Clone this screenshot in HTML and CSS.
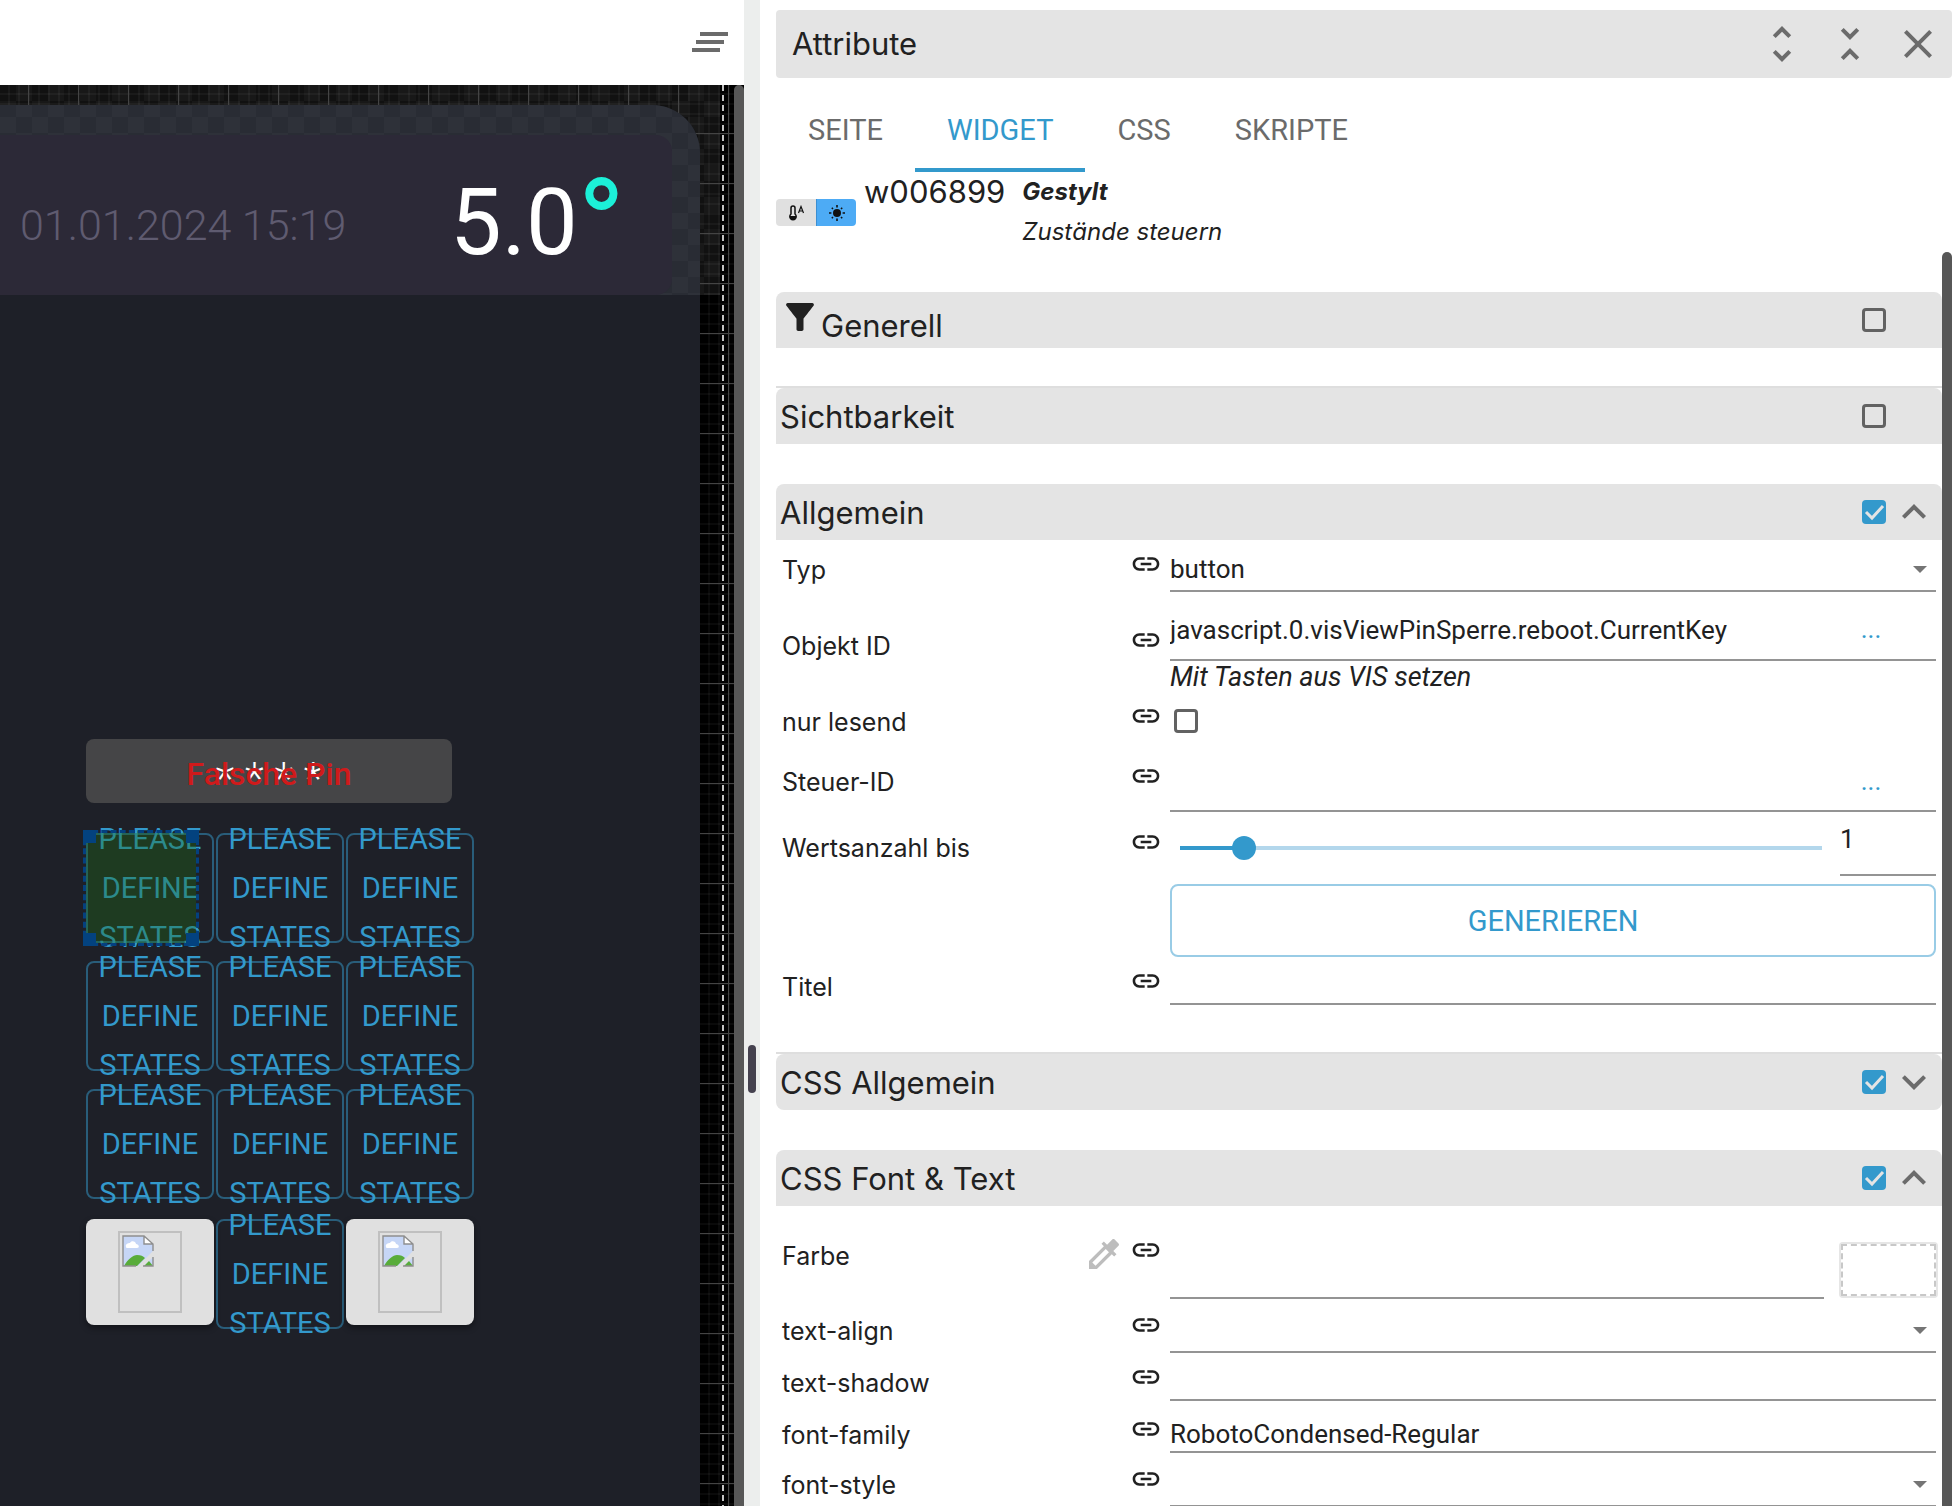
FILE: index.html
```html
<!DOCTYPE html>
<html lang="de">
<head>
<meta charset="utf-8">
<title>VIS Editor – Attribute</title>
<link rel="stylesheet" href="styles.css">
</head>
<body>
<svg class="sprite" aria-hidden="true">
  <symbol id="i-link" viewBox="0 0 24 24"><path d="M3.9 12c0-1.71 1.39-3.1 3.1-3.1h4V7H7c-2.76 0-5 2.24-5 5s2.24 5 5 5h4v-1.9H7c-1.71 0-3.1-1.39-3.1-3.1zM8 13h8v-2H8v2zm9-6h-4v1.9h4c1.71 0 3.1 1.39 3.1 3.1s-1.39 3.1-3.1 3.1h-4V17h4c2.76 0 5-2.24 5-5s-2.24-5-5-5z"/></symbol>
  <symbol id="i-less" viewBox="0 0 24 24"><path d="m12 8-6 6 1.41 1.41L12 10.83l4.59 4.58L18 14z"/></symbol>
  <symbol id="i-more" viewBox="0 0 24 24"><path d="M16.59 8.59 12 13.17 7.41 8.59 6 10l6 6 6-6z"/></symbol>
  <symbol id="i-drop" viewBox="0 0 14 7"><path d="M0 0l7 7 7-7z"/></symbol>
  <symbol id="i-broken" viewBox="0 0 32 32">
    <path d="M1 1h21l9 9v6L16 31H1z" fill="#c6d6f6"/>
    <path d="M31 22v9h-9z" fill="#c6d6f6"/>
    <path d="M4 12c-1-3 2-4 4-4 1-3 6-2 6 1 3 0 4 4 1 4H6c-1 0-2 0-2-1z" fill="#fff"/>
    <path d="M2 31c4-7 9-11 13-11 4 0 6 1 8 3l-8 8zM22 31l5-5 4 5z" fill="#58ac3a"/>
    <path d="M22 1v8h9z" fill="#fff"/>
    <path d="M31 16V9l-9-8H1v30h13M31 22v9H21M22 1v8h9" fill="none" stroke="#8e8e8e" stroke-width="1.4"/>
  </symbol>
</svg>

<main class="editor">
  <section class="workspace">
    <header class="toolbar">
      <button class="icon-btn" aria-label="Menü"><svg class="ic48" viewBox="0 0 24 24"><path d="M5 13h14v-2H5v2zm-2 4h14v-2H3v2zM7 7v2h14V7H7z"/></svg></button>
    </header>
    <div class="canvas">
      <div class="texture"></div>
      <div class="grid-lines"></div>
      <div class="device">
        <div class="device-top"><div class="status"></div></div>
      </div>
      <div class="clock">01.01.2024 15:19</div>
      <div class="temp">5.0</div>
      <div class="degree">°</div>
      <div class="guide"></div>
      <div class="pin"></div>
      <div class="pin-stars">* * * *</div>
      <div class="pin-error">Falsche Pin</div>
      <div class="keypad">
        <button class="key">PLEASE DEFINE STATES</button>
        <button class="key">PLEASE DEFINE STATES</button>
        <button class="key">PLEASE DEFINE STATES</button>
        <button class="key">PLEASE DEFINE STATES</button>
        <button class="key">PLEASE DEFINE STATES</button>
        <button class="key">PLEASE DEFINE STATES</button>
        <button class="key">PLEASE DEFINE STATES</button>
        <button class="key">PLEASE DEFINE STATES</button>
        <button class="key">PLEASE DEFINE STATES</button>
        <button class="key-image" aria-label="Bild links"><span class="missing"><svg><use href="#i-broken"/></svg></span></button>
        <button class="key">PLEASE DEFINE STATES</button>
        <button class="key-image" aria-label="Bild rechts"><span class="missing"><svg><use href="#i-broken"/></svg></span></button>
      </div>
      <div class="selection"><i class="nw"></i><i class="ne"></i><i class="sw"></i><i class="se"></i></div>
      <div class="canvas-scroll"></div>
    </div>
  </section>

  <div class="splitter"><span></span></div>

  <section class="panel">
    <header class="panel-head">
      <h1>Attribute</h1>
      <button class="icon-btn" aria-label="Alle ausklappen"><svg class="ic48" viewBox="0 0 24 24"><path d="M12 5.83 15.17 9l1.41-1.41L12 3 7.41 7.59 8.83 9 12 5.83zm0 12.34L8.83 15l-1.41 1.41L12 21l4.59-4.59L15.17 15 12 18.17z"/></svg></button>
      <button class="icon-btn" aria-label="Alle einklappen"><svg class="ic48" viewBox="0 0 24 24"><path d="M7.41 18.59 8.83 20 12 16.83 15.17 20l1.41-1.41L12 14l-4.59 4.59zm9.18-13.18L15.17 4 12 7.17 8.83 4 7.41 5.41 12 10l4.59-4.59z"/></svg></button>
      <button class="icon-btn" aria-label="Schließen"><svg class="ic48" viewBox="0 0 24 24"><path d="M19 6.41 17.59 5 12 10.59 6.41 5 5 6.41 10.59 12 5 17.59 6.41 19 12 13.41 17.59 19 19 17.59 13.41 12z"/></svg></button>
    </header>
    <nav class="tabs">
      <button>SEITE</button>
      <button class="active">WIDGET</button>
      <button>CSS</button>
      <button>SKRIPTE</button>
    </nav>
    <div class="widget-info">
      <div class="chips">
        <span class="chip"><svg viewBox="0 0 20 16"><path d="M5 9V3a2 2 0 0 1 4 0v6a3.200 3.200 0 1 1-4 0z" fill="none" stroke="#111" stroke-width="1.500"/><path d="M4 11h6v2l-2 1.500H6L4 13z"/><path d="M12.500 8 15 1.500 17.500 8M13.500 6h3" fill="none" stroke="#111" stroke-width="1.200"/></svg></span>
        <span class="chip blue"><svg viewBox="0 0 20 20"><circle cx="10" cy="10" r="5"/><path d="M10 0v3M10 17v3M0 10h3M17 10h3M3.500 3.500l1.500 1.500M15 15l1.500 1.500M3.500 16.500 5 15M15 5l1.500-1.500" stroke="#111" stroke-width="2" fill="none"/></svg></span>
      </div>
      <div class="widget-id">w006899</div>
      <div class="widget-type"><b>Gestylt</b><span>Zustände steuern</span></div>
    </div>

    <div class="scroll">
      <form class="sections">
        <div class="bar filter">
          <svg class="funnel" viewBox="0 0 24 24"><path d="M4.250 5.610C6.270 8.200 10 13 10 13v6c0 .55.45 1 1 1h2c.55 0 1-.45 1-1v-6s3.720-4.800 5.740-7.390c.51-.66.04-1.610-.79-1.610H5.040c-.83 0-1.300.95-.79 1.610z"/></svg>
          <label for="c1">Generell</label><input type="checkbox" id="c1"><span class="chev"></span>
        </div>
        <div class="bar ruled"><label for="c2">Sichtbarkeit</label><input type="checkbox" id="c2"><span class="chev"></span></div>

        <div class="bar"><label for="c3">Allgemein</label><input type="checkbox" id="c3" checked><svg class="chev"><use href="#i-less"/></svg></div>
        <div class="rows general">
          <div class="row choice">
            <label for="f-typ">Typ</label><svg class="link"><use href="#i-link"/></svg>
            <div class="field line"><select id="f-typ"><option>button</option></select><svg class="drop"><use href="#i-drop"/></svg></div>
          </div>
          <div class="row object">
            <label for="f-oid">Objekt ID</label><svg class="link"><use href="#i-link"/></svg>
            <div class="stack">
              <div class="field line tall"><input type="text" id="f-oid" value="javascript.0.visViewPinSperre.reboot.CurrentKey"><button type="button" class="dots">...</button></div>
              <em>Mit Tasten aus VIS setzen</em>
            </div>
          </div>
          <div class="row tick">
            <label for="f-ro">nur lesend</label><svg class="link"><use href="#i-link"/></svg>
            <div class="field"><input type="checkbox" id="f-ro"></div>
          </div>
          <div class="row tick">
            <label for="f-sid">Steuer-ID</label><svg class="link"><use href="#i-link"/></svg>
            <div class="field line tall"><input type="text" id="f-sid"><button type="button" class="dots">...</button></div>
          </div>
          <div class="row slide">
            <label for="f-cnt">Wertsanzahl bis</label><svg class="link"><use href="#i-link"/></svg>
            <div class="field"><input type="range" id="f-cnt" min="0" max="10" value="1"><input type="text" class="count line" aria-label="Wert" value="1"></div>
          </div>
          <div class="row">
            <button type="button" class="generate">GENERIEREN</button>
          </div>
          <div class="row text">
            <label for="f-tit">Titel</label><svg class="link"><use href="#i-link"/></svg>
            <div class="field line"><input type="text" id="f-tit"></div>
          </div>
        </div>

        <div class="bar ruled closed"><label for="c4">CSS Allgemein</label><input type="checkbox" id="c4" checked><svg class="chev"><use href="#i-more"/></svg></div>

        <div class="bar"><label for="c5">CSS Font &amp; Text</label><input type="checkbox" id="c5" checked><svg class="chev"><use href="#i-less"/></svg></div>
        <div class="rows font">
          <div class="row color">
            <label for="f-col">Farbe</label>
            <svg class="picker" viewBox="0 0 24 24"><path d="M20.710 5.630l-2.340-2.340c-.39-.39-1.020-.39-1.410 0l-3.120 3.120-1.930-1.910-1.410 1.410 1.420 1.420L3 16.250V21h4.750l8.920-8.920 1.420 1.420 1.410-1.410-1.920-1.920 3.120-3.120c.4-.4.4-1.030.01-1.420zM6.920 19L5 17.080l8.060-8.060 1.920 1.920L6.920 19z"/></svg>
            <svg class="link"><use href="#i-link"/></svg>
            <div class="field"><input type="text" class="line" id="f-col"><button type="button" class="swatch" aria-label="Farbe wählen"><span></span></button></div>
          </div>
          <div class="row choice">
            <label for="f-al">text-align</label><svg class="link"><use href="#i-link"/></svg>
            <div class="field line"><select id="f-al"><option></option></select><svg class="drop"><use href="#i-drop"/></svg></div>
          </div>
          <div class="row text">
            <label for="f-sh">text-shadow</label><svg class="link"><use href="#i-link"/></svg>
            <div class="field line"><input type="text" id="f-sh"></div>
          </div>
          <div class="row text family">
            <label for="f-ff">font-family</label><svg class="link"><use href="#i-link"/></svg>
            <div class="field line"><input type="text" id="f-ff" value="RobotoCondensed-Regular"></div>
          </div>
          <div class="row choice">
            <label for="f-fs">font-style</label><svg class="link"><use href="#i-link"/></svg>
            <div class="field line"><select id="f-fs"><option></option></select><svg class="drop"><use href="#i-drop"/></svg></div>
          </div>
        </div>
      </form>
      <div class="thumb"></div>
    </div>
  </section>
</main>
</body>
</html>
```
FILE: styles.css
```css
* { box-sizing: border-box; }

body {
  margin: 0;
  background: #fff;
  color: #212121;
  font-family: Inter, "Liberation Sans", sans-serif;
  font-size: 25px;
}

button, input, select {
  margin: 0;
  padding: 0;
  border: 0;
  background: none;
  color: inherit;
  font: 26px Roboto, sans-serif;
  outline: 0;
}

svg { display: block; flex: none; }
.sprite { position: absolute; width: 0; height: 0; }

.editor {
  display: grid;
  grid-template-columns: minmax(0, 744fr) 16px minmax(0, 1198fr);
  height: 100vh;
  overflow: hidden;
}

/* workspace */

.workspace { display: flex; flex-direction: column; min-height: 0; }

.toolbar {
  display: flex;
  flex: none;
  align-items: center;
  justify-content: flex-end;
  height: 85px;
  padding: 0 10px 2px 0;
}

.icon-btn { display: block; flex: none; }
.ic48 { width: 48px; height: 48px; fill: #6b6b6b; }

.canvas {
  position: relative;
  flex: 1;
  overflow: hidden;
  background: #000;
  font-family: Roboto, sans-serif;
}

.texture {
  position: absolute;
  top: 0;
  left: 0;
  right: 24px;
  height: 210px;
  background: repeating-conic-gradient(#181818 0 25%, #111 0 50%) 0 0 / 32px 32px;
}

.grid-lines {
  position: absolute;
  inset: 0;
  background:
    linear-gradient(90deg, #444 1px, transparent 1px) 28px 0 / 50px 50px,
    linear-gradient(#444 1px, transparent 1px) 0 48px / 50px 50px,
    linear-gradient(90deg, rgba(255, 255, 255, .04) 2px, transparent 2px) 8px 0 / 10px 10px,
    linear-gradient(rgba(255, 255, 255, .04) 2px, transparent 2px) 0 8px / 10px 10px;
}

.device {
  position: absolute;
  top: 20px;
  left: 0;
  right: 44px;
  bottom: 0;
  overflow: hidden;
  border-radius: 0 48px 0 0;
  background: #1e2028;
}

.device-top {
  height: 190px;
  padding: 30px 28px 0 0;
  background: repeating-conic-gradient(#292c34 0 25%, #2e3139 0 50%) 0 12px / 32px 32px;
}

.status { height: 160px; border-radius: 0 16px 16px 0; background: #2c2937; }

.clock {
  position: absolute;
  top: 112px;
  left: 20px;
  color: #5f5b70;
  font-size: 43px;
  font-weight: 300;
  line-height: 56px;
  white-space: nowrap;
}

.temp {
  position: absolute;
  top: 82px;
  left: 450px;
  color: #fff;
  font-size: 92px;
  line-height: 112px;
}

.degree {
  position: absolute;
  top: 82px;
  left: 577px;
  color: #1cf0d8;
  font-size: 130px;
  line-height: 120px;
}

.guide {
  position: absolute;
  top: 0;
  bottom: 0;
  right: 20px;
  width: 2px;
  background: repeating-linear-gradient(#c4c4c4 0 6px, transparent 6px 10px);
}

.canvas-scroll {
  position: absolute;
  top: 0;
  bottom: 0;
  right: 0;
  width: 10px;
  border-radius: 5px 5px 0 0;
  background: #575757;
}

/* the error message is laid over the masked digits */
.pin, .pin-stars, .pin-error {
  position: absolute;
  top: 654px;
  left: 86px;
  width: 366px;
  height: 64px;
  text-align: center;
}
.pin { border-radius: 8px; background: #454547; }
.pin-stars { color: #fff; font-size: 44px; font-weight: 300; line-height: 80px; }
.pin-error { color: #d01a1b; font-size: 32px; font-weight: 500; line-height: 70px; }

.keypad {
  position: absolute;
  top: 748px;
  left: 86px;
  display: grid;
  grid-template-columns: repeat(3, 128px);
  grid-template-rows: 110px 110px 112px 110px;
  gap: 18px 2px;
}

.key {
  display: flex;
  align-items: center;
  height: 110px;
  padding: 0 10px;
  border: 2px solid rgba(51, 153, 204, .5);
  border-radius: 8px;
  color: #39c;
  font-size: 29px;
  line-height: 49px;
  text-align: center;
}

.key-image {
  display: flex;
  justify-content: center;
  height: 106px;
  padding-top: 12px;
  border-radius: 8px;
  background: #e0e0e0;
  box-shadow: 0 3px 6px rgba(0, 0, 0, .4);
}

.missing { width: 64px; height: 82px; padding: 2px; border: 2px solid #c0c0c0; }
.missing svg { width: 32px; height: 32px; }

.selection {
  position: absolute;
  top: 745px;
  left: 83px;
  width: 116px;
  height: 116px;
  border: 3px dashed #04407f;
  background: rgba(32, 112, 20, .35) padding-box;
}
.selection i { position: absolute; width: 13px; height: 13px; background: #03427f; }
.nw { top: -3px; left: -3px; }
.ne { top: -3px; right: -3px; }
.sw { bottom: -3px; left: -3px; }
.se { bottom: -3px; right: -3px; }

.splitter {
  display: flex;
  justify-content: center;
  padding-top: 1045px;
  background: #eceeed;
}
.splitter span { width: 8px; height: 48px; border-radius: 4px; background: #45424f; }

/* attribute panel */

.panel {
  display: flex;
  flex-direction: column;
  min-height: 0;
  padding: 10px 6px 0 16px;
}

.panel-head {
  display: flex;
  flex: none;
  align-items: center;
  gap: 20px;
  height: 68px;
  padding: 0 10px 0 16px;
  border-radius: 4px;
  background: #e4e4e4;
}
.panel-head h1 { flex: 1; margin: 0; font-size: 31px; font-weight: 400; line-height: 36px; }

.tabs { display: flex; flex: none; height: 94px; padding-top: 10px; }
.tabs button {
  padding: 4px 32px 0;
  border-bottom: 4px solid transparent;
  color: #6b6b6b;
  font-size: 29px;
}
.tabs .active { border-color: #39c; color: #39c; }

.widget-info { display: flex; flex: none; height: 80px; }
.chips { display: flex; padding-top: 27px; }
.chip {
  display: flex;
  align-items: center;
  justify-content: center;
  width: 40px;
  height: 27px;
  border-radius: 4px 0 0 4px;
  background: #e0e0e0;
  fill: #111;
}
.chip svg { height: 16px; }
.chip.blue { border-left: 1px solid #3c8fd2; border-radius: 0 4px 4px 0; background: #4dabf5; }
.widget-id { margin: 0 17px 0 8px; font-size: 31px; line-height: 40px; }
.widget-type { display: flex; flex-direction: column; font-size: 24px; font-style: italic; line-height: 40px; }

.scroll { display: flex; flex: 1; min-height: 0; overflow: hidden; }
.sections { flex: 1; padding-top: 40px; }
.thumb { flex: none; width: 10px; border-radius: 5px 5px 0 0; background: #575757; }

.bar {
  position: relative;
  display: flex;
  align-items: center;
  height: 56px;
  margin-bottom: 40px;
  padding: 0 4px;
  border-radius: 8px 8px 0 0;
  background: #e4e4e4;
  font-size: 31px;
}
.bar label { flex: 1; }
.bar:has(+ .rows) { margin-bottom: 0; }
.closed { border-radius: 8px; }
.ruled::before {
  content: "";
  position: absolute;
  left: 0;
  right: 0;
  bottom: 100%;
  height: 2px;
  background: #dedede;
}
.filter { padding-left: 3px; }
.filter label { padding-top: 10px; }
.funnel { align-self: flex-start; width: 42px; height: 42px; margin-top: 4px; fill: #212121; }
.chev { width: 48px; height: 48px; margin-left: 4px; fill: #6b6b6b; }

input[type="checkbox"] {
  flex: none;
  width: 24px;
  height: 24px;
  border: 3px solid #626262;
  border-radius: 4px;
  appearance: none;
}
input[type="checkbox"]:checked {
  border: 0;
  background: #39c url("data:image/svg+xml,%3Csvg xmlns='http://www.w3.org/2000/svg' viewBox='0 0 24 24'%3E%3Cpath d='M4 12l6 6L21 6' fill='none' stroke='%23e4e4e4' stroke-width='3'/%3E%3C/svg%3E") center / 24px 24px;
}

.row {
  display: flex;
  align-items: center;
  padding: 0 6px;
}
.row > label { flex: 1; }
.general { padding-bottom: 49px; }

.link { width: 32px; height: 32px; margin: 0 8px 12px 0; fill: #212121; }
.picker { width: 40px; height: 40px; margin: 0 6px 4px 0; fill: #bdbdbd; }

.field, .stack { flex: 0 0 766px; width: 766px; }
.field { position: relative; display: flex; align-self: stretch; align-items: center; }
.line { border-bottom: 2px solid #949494; }
.field input[type="text"], .field select { flex: 1; min-width: 0; align-self: stretch; appearance: none; }
.drop { position: absolute; right: 9px; width: 14px; height: 7px; fill: #757575; }

.choice { height: 44px; margin-top: 8px; }
.font .choice { margin-top: 10px; }
.object { height: 92px; margin-top: 8px; }
.stack em { display: block; font-family: Roboto, sans-serif; font-size: 27px; line-height: 32px; }
.stack .tall { height: 62px; }
.object .tall input { padding-top: 2px; }
.tick { height: 60px; }
.tick input[type="checkbox"] { margin: 0 0 2px 4px; }
.dots { width: 76px; margin-right: 16px; padding-right: 22px; color: #39c; }

.slide { height: 72px; }
.slide .field { align-items: stretch; }
.slide input[type="range"] {
  flex: 1;
  min-width: 0;
  margin: 0 6px 0 -2px;
  appearance: none;
}
input[type="range"]::-webkit-slider-runnable-track {
  height: 24px;
  background: linear-gradient(90deg, #39c 10%, #b3d7ec 10%) center / calc(100% - 24px) 4px no-repeat;
}
input[type="range"]::-webkit-slider-thumb {
  width: 24px;
  height: 24px;
  border-radius: 50%;
  background: #39c;
  appearance: none;
}
.slide .field .count { flex: 0 0 96px; height: 64px; padding-bottom: 8px; align-self: flex-start; }

.generate {
  width: 766px;
  height: 73px;
  margin-left: auto;
  border: 2px solid #99cce6;
  border-radius: 8px;
  color: #39c;
  font-size: 29px;
}

.text { height: 36px; margin-top: 12px; }
.text.family { margin-top: 16px; }

.color { height: 93px; padding-top: 7px; }
.color .field { gap: 15px; align-items: flex-end; }
.swatch {
  flex: none;
  width: 99px;
  height: 56px;
  margin: 0 -2px 1px 0;
  padding: 2px;
  border-radius: 4px;
  background: #e6e6e6;
}
.swatch span { display: block; height: 52px; border: 2px dashed #c8c8c8; background: #fff; }
```
